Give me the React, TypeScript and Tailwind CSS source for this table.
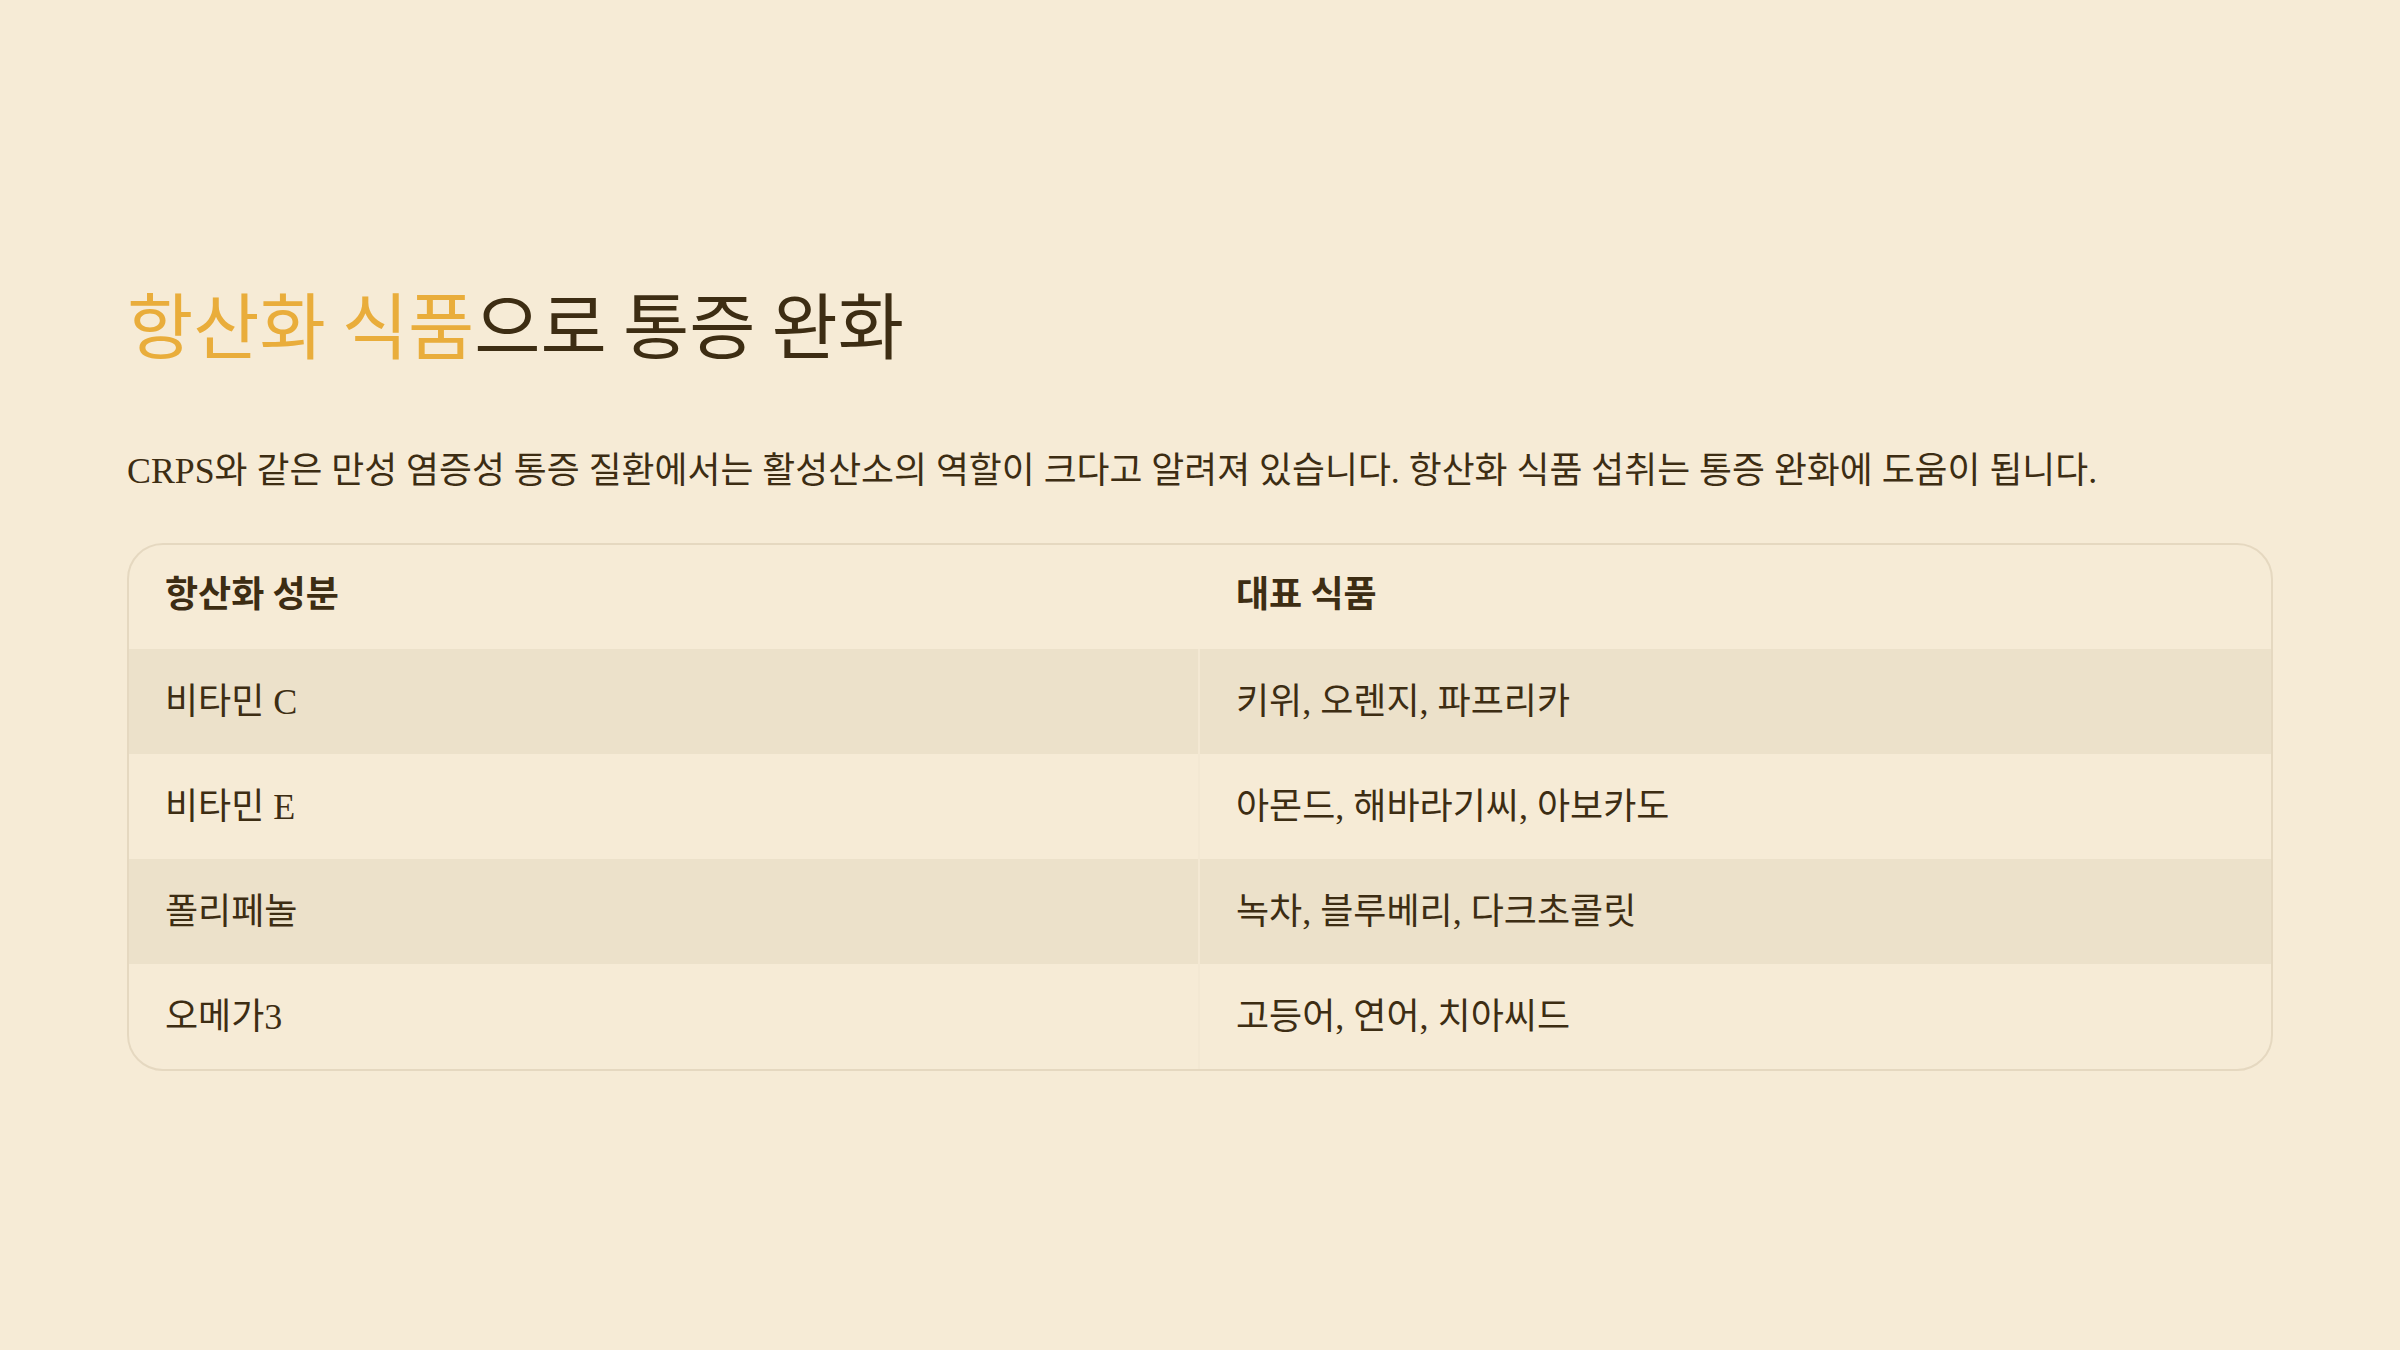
import React from 'react';

const rows = [
  { name: '비타민 C', foods: '키위, 오렌지, 파프리카' },
  { name: '비타민 E', foods: '아몬드, 해바라기씨, 아보카도' },
  { name: '폴리페놀', foods: '녹차, 블루베리, 다크초콜릿' },
  { name: '오메가3', foods: '고등어, 연어, 치아씨드' },
];

export default function App() {
  return (
    <div className="w-full h-screen bg-[#f6ebd6] flex flex-col justify-center px-[127px] text-[#3d2d13] font-['Liberation_Serif','Noto_Sans_CJK_KR',serif]">
      <h1 className="text-[72px] leading-[1.2] font-normal font-['Noto_Sans_CJK_KR',sans-serif]">
        <span className="text-[#e9ad3b]">항산화 식품</span>으로 통증 완화
      </h1>

      <p className="mt-[81px] text-[35.8px] leading-[1.4]">
        CRPS와 같은 만성 염증성 통증 질환에서는 활성산소의 역할이 크다고 알려져 있습니다. 항산화 식품 섭취는 통증 완화에 도움이 됩니다.
      </p>

      <div className="mt-[47px] border-2 border-[#e5d8c0] rounded-[36px] overflow-hidden">
        <div className="grid grid-cols-2 h-[104px] items-center pb-[12px] font-bold text-[36px] font-['Noto_Sans_CJK_KR',sans-serif]">
          <div className="px-[36px]">항산화 성분</div>
          <div className="px-[36px]">대표 식품</div>
        </div>
        {rows.map((r, i) => (
          <div
            key={r.name}
            className={i % 2 === 0 ? 'grid grid-cols-2 h-[105px] bg-[#ece1ca] text-[36px]' : 'grid grid-cols-2 h-[105px] text-[36px]'}
          >
            <div className="px-[36px] flex items-center border-r-2 border-[#f3e8d3]">{r.name}</div>
            <div className="px-[36px] flex items-center">{r.foods}</div>
          </div>
        ))}
      </div>
    </div>
  );
}
